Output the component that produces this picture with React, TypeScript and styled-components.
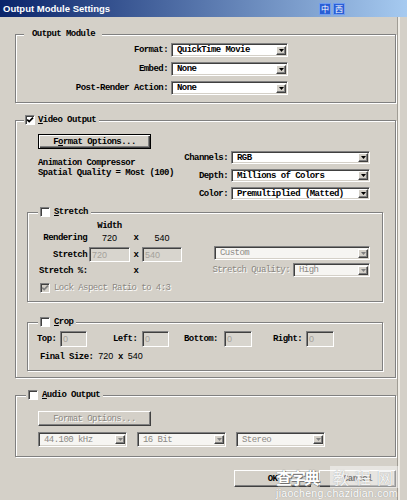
import React from "react";
import styled, { createGlobalStyle } from "styled-components";

const GlobalStyle = createGlobalStyle`
  html, body {
    margin: 0;
    padding: 0;
    background: #d4d0c8;
  }
`;

const Window = styled.div`
  position: relative;
  width: 407px;
  height: 500px;
  overflow: hidden;
  background: #d4d0c8;
  color: #000;
  font-family: "Liberation Mono", "Courier New", monospace;
  font-size: 9px;
  font-weight: bold;
  letter-spacing: -0.55px;
  line-height: 10px;
`;

const TitleBar = styled.div`
  display: flex;
  align-items: center;
  height: 17px;
  padding-left: 3px;
  background: linear-gradient(to right, #0a246a, #a6caf0);
`;

const Title = styled.span`
  font-family: "Liberation Sans", Arial, sans-serif;
  font-size: 9.5px;
  font-weight: bold;
  letter-spacing: 0;
  color: #fff;
`;

const ImeBar = styled.div`
  display: flex;
  gap: 2px;
  margin-left: auto;
  margin-right: 62px;
`;

const ImeKey = styled.span`
  width: 12px;
  height: 12px;
  box-sizing: border-box;
  display: flex;
  align-items: center;
  justify-content: center;
  background: #2a5fd6;
  border: 1px solid #6f9cf0;
  color: #fff;
  font-family: "Noto Sans CJK SC", sans-serif;
  font-size: 8px;
  font-weight: normal;
  letter-spacing: 0;
`;

const Frame = styled.div`
  display: flex;
  height: 483px;
`;

const Body = styled.div`
  display: flex;
  flex-direction: column;
  width: 381px;
  padding: 11px 0 0 15px;
`;

const FrameEdge = styled.div`
  flex: 1;
  margin-left: 1px;
  border-left: 1px solid #a09c94;
  box-shadow: inset 2px 0 0 #eeebe4;
`;

const Group = styled.fieldset<{ $mt?: number }>`
  margin: ${(p) => p.$mt ?? 0}px 0 0;
  padding: 0;
  min-inline-size: 0;
  border: 1px solid #808080;
  box-shadow: inset 1px 1px 0 #fff, 1px 1px 0 #fff;
`;

const Legend = styled.legend<{ $ml: number; $pl: number; $pr: number }>`
  margin-left: ${(p) => p.$ml}px;
  padding: 0 ${(p) => p.$pr}px 0 ${(p) => p.$pl}px;
  height: 12px;
  line-height: 12px;
  background: #d4d0c8;
`;

const LegendRow = styled.span<{ $gap: number }>`
  display: inline-flex;
  align-items: center;
  gap: ${(p) => p.$gap}px;
  height: 12px;
  vertical-align: top;
`;

const Key = styled.span`
  text-decoration: underline;
`;

const Dim = styled.span`
  flex-shrink: 0;
  white-space: nowrap;
  font-weight: normal;
  color: #8a8781;
  text-shadow: 1px 1px 0 #fff;
`;

const Box = styled.span<{ $disabled?: boolean }>`
  width: 10px;
  height: 10px;
  box-sizing: border-box;
  display: inline-flex;
  align-items: center;
  justify-content: center;
  background: ${(p) => (p.$disabled ? "#d4d0c8" : "#fff")};
  border: 1px solid;
  border-color: #808080 #fff #fff #808080;
  box-shadow: inset 1px 1px 0 #404040;
`;

const FormGrid = styled.div<{ $cols: string; $rowGap: number }>`
  display: grid;
  grid-template-columns: ${(p) => p.$cols};
  column-gap: 3px;
  row-gap: ${(p) => p.$rowGap}px;
  align-items: center;
`;

const FieldLabel = styled.span`
  text-align: right;
  white-space: nowrap;
`;

const SelectBox = styled.div<{ $w: number; $h: number; $disabled?: boolean }>`
  width: ${(p) => p.$w}px;
  height: ${(p) => p.$h}px;
  flex-shrink: 0;
  box-sizing: border-box;
  display: flex;
  align-items: center;
  padding: 0 1px 0 5px;
  background: ${(p) => (p.$disabled ? "#f6f5f2" : "#fff")};
  color: ${(p) => (p.$disabled ? "#8c8a86" : "#000")};
  font-weight: ${(p) => (p.$disabled ? "normal" : "bold")};
  border: 1px solid;
  border-color: #808080 #fff #fff #808080;
  box-shadow: inset 1px 1px 0 #404040, inset -1px -1px 0 #d4d0c8;
`;

const SelectValue = styled.span`
  flex: 1;
  white-space: nowrap;
  overflow: hidden;
`;

const DropBtn = styled.span`
  width: 10px;
  height: 9px;
  box-sizing: border-box;
  display: flex;
  align-items: center;
  justify-content: center;
  background: #d4d0c8;
  border: 1px solid;
  border-color: #fff #404040 #404040 #fff;
  box-shadow: inset -1px -1px 0 #808080;
`;

const TextBox = styled.span<{ $w: number; $h: number }>`
  width: ${(p) => p.$w}px;
  height: ${(p) => p.$h}px;
  box-sizing: border-box;
  display: flex;
  align-items: center;
  padding-left: 2px;
  background: #d8d5ce;
  color: #a4a19b;
  font-family: "Liberation Sans", Arial, sans-serif;
  font-size: 9px;
  font-weight: normal;
  letter-spacing: 0;
  border: 1px solid;
  border-color: #808080 #fff #fff #808080;
  box-shadow: inset 1px 1px 0 #404040;
`;

const Button = styled.div<{ $w: number; $h: number; $default?: boolean }>`
  width: ${(p) => p.$w}px;
  height: ${(p) => p.$h}px;
  box-sizing: border-box;
  display: flex;
  align-items: center;
  justify-content: center;
  background: #d4d0c8;
  border: 1px solid;
  border-color: ${(p) => (p.$default ? "#000" : "#fff #404040 #404040 #fff")};
  box-shadow: ${(p) =>
    p.$default
      ? "inset 1px 1px 0 #fff, inset -1px -1px 0 #404040, inset -2px -2px 0 #808080"
      : "inset -1px -1px 0 #808080"};
`;

const VideoInner = styled.div`
  padding: 0 12px 6px 11px;
`;

const TopArea = styled.div`
  display: flex;
  justify-content: space-between;
  padding: 0 13px 0 11px;
`;

const LeftCol = styled.div`
  display: flex;
  flex-direction: column;
  padding-top: 8px;
`;

const Info = styled.div`
  margin-top: 9px;
  white-space: pre;
`;

const RightCol = styled.div`
  padding-top: 25px;
`;

const StretchBody = styled.div`
  display: flex;
  justify-content: space-between;
`;

const StretchGrid = styled.div`
  display: grid;
  grid-template-columns: 50px 41px 12px 40px;
  grid-template-rows: 10px 14px 19px 14px 20px;
  align-items: center;
  margin: 3px 0 3px 11px;
`;

const Cell = styled.span<{ $align?: "left" | "center" | "right" }>`
  text-align: ${(p) => p.$align ?? "left"};
  white-space: nowrap;
  padding-right: ${(p) => (p.$align === "right" ? 2 : 0)}px;
`;

const Num = styled.span`
  font-family: "Liberation Sans", Arial, sans-serif;
  font-size: 9px;
  font-weight: normal;
  letter-spacing: 0;
`;

const LockRow = styled.div`
  grid-column: 1 / -1;
  display: flex;
  align-items: center;
  gap: 4px;
  margin-left: 1px;
`;

const StretchSide = styled.div`
  display: flex;
  flex-direction: column;
  gap: 3px;
  width: 156px;
  margin: 28px 12px 0 0;
`;

const QualityRow = styled.div`
  display: flex;
  justify-content: flex-end;
  align-items: center;
  gap: 3px;
`;

const CropRow = styled.div`
  display: flex;
  align-items: center;
  height: 16px;
  margin: 3px 0 0 9px;
`;

const CropLabel = styled.span<{ $w: number }>`
  width: ${(p) => p.$w}px;
  white-space: nowrap;
`;

const CropField = styled.div<{ $mr: number }>`
  display: flex;
  align-items: center;
  margin-right: ${(p) => p.$mr}px;
`;

const FinalSize = styled.div`
  margin: 4px 0 8px 12px;
`;

const AudioInner = styled.div`
  display: flex;
  flex-direction: column;
  padding: 10px 0 9px 22px;
`;

const AudioSelects = styled.div`
  display: flex;
  gap: 10px;
  margin-top: 6px;
`;

const Footer = styled.div`
  display: flex;
  justify-content: flex-end;
  gap: 8px;
  margin-top: 13px;
`;

const Watermark = styled.div`
  position: absolute;
  left: 276px;
  top: 466px;
  display: flex;
  flex-direction: column;
  pointer-events: none;
  font-weight: normal;
`;

const MarkTitle = styled.div`
  display: flex;
  align-items: center;
  gap: 12px;
  font-family: "Noto Sans CJK SC", sans-serif;
  font-size: 16px;
  line-height: 22px;
`;

const MarkMain = styled.span`
  color: #fff;
  font-weight: bold;
  letter-spacing: -2px;
  text-shadow: 0 0 1px #555, 1px 1px 0 #777;
`;

const MarkSub = styled.span`
  color: #f4f4f4;
  letter-spacing: 6px;
  padding: 0 0 0 3px;
  background: rgba(255, 255, 255, 0.45);
  text-shadow: 0 0 1px #999;
`;

const MarkUrl = styled.span`
  font-family: "Liberation Sans", Arial, sans-serif;
  font-size: 10.5px;
  line-height: 11px;
  letter-spacing: 0.3px;
  color: #fff;
  text-shadow: 0 0 1px #888;
`;

function Arrow({ disabled }: { disabled?: boolean }) {
  return (
    <svg width="5" height="3" viewBox="0 0 5 3">
      <path d="M0 0h5L2.5 3z" fill={disabled ? "#808080" : "#000"} />
    </svg>
  );
}

function Select({
  value,
  w,
  h = 14,
  disabled,
}: {
  value: string;
  w: number;
  h?: number;
  disabled?: boolean;
}) {
  return (
    <SelectBox $w={w} $h={h} $disabled={disabled}>
      <SelectValue>{value}</SelectValue>
      <DropBtn>
        <Arrow disabled={disabled} />
      </DropBtn>
    </SelectBox>
  );
}

function Check({ checked, disabled }: { checked?: boolean; disabled?: boolean }) {
  return (
    <Box $disabled={disabled}>
      {checked && (
        <svg width="8" height="8" viewBox="0 0 8 8">
          <path
            d="M1.2 3.6 L3.2 5.6 L7 1.6"
            fill="none"
            stroke={disabled ? "#808080" : "#000"}
            strokeWidth="1.7"
          />
        </svg>
      )}
    </Box>
  );
}

export default function App() {
  return (
    <Window>
      <GlobalStyle />
      <TitleBar>
        <Title>Output Module Settings</Title>
        <ImeBar>
          <ImeKey>中</ImeKey>
          <ImeKey>西</ImeKey>
        </ImeBar>
      </TitleBar>

      <Frame>
        <Body>
          <Group>
            <Legend $ml={8} $pl={8} $pr={7}>
              Output Module
            </Legend>
            <FormGrid $cols="152px 117px" $rowGap={5} style={{ padding: "3px 0 7px" }}>
              <FieldLabel>Format:</FieldLabel>
              <Select value="QuickTime Movie" w={117} />
              <FieldLabel>Embed:</FieldLabel>
              <Select value="None" w={117} />
              <FieldLabel>Post-Render Action:</FieldLabel>
              <Select value="None" w={117} />
            </FormGrid>
          </Group>

          <Group $mt={11}>
            <Legend $ml={8} $pl={1} $pr={3}>
              <LegendRow $gap={3}>
                <Check checked />
                <span>
                  <Key>V</Key>ideo Output
                </span>
              </LegendRow>
            </Legend>
            <VideoInner>
              <TopArea>
                <LeftCol>
                  <Button $w={113} $h={15} $default>
                    <span>
                      F<Key>o</Key>rmat Options...
                    </span>
                  </Button>
                  <Info>{"Animation Compressor\nSpatial Quality = Most (100)"}</Info>
                </LeftCol>
                <RightCol>
                  <FormGrid $cols="auto 139px" $rowGap={5}>
                    <FieldLabel>Channels:</FieldLabel>
                    <Select value="RGB" w={139} h={13} />
                    <FieldLabel>Depth:</FieldLabel>
                    <Select value="Millions of Colors" w={139} h={13} />
                    <FieldLabel>Color:</FieldLabel>
                    <Select value="Premultiplied (Matted)" w={139} h={13} />
                  </FormGrid>
                </RightCol>
              </TopArea>

              <Group $mt={6}>
                <Legend $ml={10} $pl={2} $pr={3}>
                  <LegendRow $gap={4}>
                    <Check />
                    <span>
                      <Key>S</Key>tretch
                    </span>
                  </LegendRow>
                </Legend>
                <StretchBody>
                  <StretchGrid>
                    <span />
                    <Cell $align="center">Width</Cell>
                    <span />
                    <span />

                    <Cell $align="right">Rendering</Cell>
                    <Cell $align="center">
                      <Num>720</Num>
                    </Cell>
                    <Cell $align="center">x</Cell>
                    <Cell $align="center">
                      <Num>540</Num>
                    </Cell>

                    <Cell $align="right">Stretch</Cell>
                    <TextBox $w={41} $h={15}>720</TextBox>
                    <Cell $align="center">x</Cell>
                    <TextBox $w={40} $h={15}>540</TextBox>

                    <Cell>Stretch %:</Cell>
                    <span />
                    <Cell $align="center">x</Cell>
                    <span />

                    <LockRow>
                      <Check checked disabled />
                      <Dim>Lock Aspect Ratio to 4:3</Dim>
                    </LockRow>
                  </StretchGrid>
                  <StretchSide>
                    <Select value="Custom" w={156} disabled />
                    <QualityRow>
                      <Dim>Stretch Quality:</Dim>
                      <Select value="High" w={77} disabled />
                    </QualityRow>
                  </StretchSide>
                </StretchBody>
              </Group>

              <Group $mt={14}>
                <Legend $ml={10} $pl={2} $pr={3}>
                  <LegendRow $gap={4}>
                    <Check />
                    <span>
                      <Key>C</Key>rop
                    </span>
                  </LegendRow>
                </Legend>
                <CropRow>
                  <CropField $mr={26}>
                    <CropLabel $w={23}>Top:</CropLabel>
                    <TextBox $w={27} $h={16}>0</TextBox>
                  </CropField>
                  <CropField $mr={15}>
                    <CropLabel $w={29}>Left:</CropLabel>
                    <TextBox $w={27} $h={16}>0</TextBox>
                  </CropField>
                  <CropField $mr={21}>
                    <CropLabel $w={40}>Bottom:</CropLabel>
                    <TextBox $w={28} $h={16}>0</TextBox>
                  </CropField>
                  <CropField $mr={0}>
                    <CropLabel $w={33}>Right:</CropLabel>
                    <TextBox $w={28} $h={16}>0</TextBox>
                  </CropField>
                </CropRow>
                <FinalSize>
                  Final Size: <Num>720</Num> x <Num>540</Num>
                </FinalSize>
              </Group>
            </VideoInner>
          </Group>

          <Group $mt={11}>
            <Legend $ml={10} $pl={2} $pr={3}>
              <LegendRow $gap={4}>
                <Check />
                <span>
                  <Key>A</Key>udio Output
                </span>
              </LegendRow>
            </Legend>
            <AudioInner>
              <Button $w={113} $h={15}>
                <Dim>Format Options...</Dim>
              </Button>
              <AudioSelects>
                <Select value="44.100 kHz" w={89} h={15} disabled />
                <Select value="16 Bit" w={89} h={15} disabled />
                <Select value="Stereo" w={89} h={15} disabled />
              </AudioSelects>
            </AudioInner>
          </Group>

          <Footer>
            <Button $w={77} $h={17}>
              OK
            </Button>
            <Button $w={77} $h={17}>
              Cancel
            </Button>
          </Footer>
        </Body>
        <FrameEdge />
      </Frame>

      <Watermark>
        <MarkTitle>
          <MarkMain>查字典</MarkMain>
          <MarkSub>教程网</MarkSub>
        </MarkTitle>
        <MarkUrl>jiaocheng.chazidian.com</MarkUrl>
      </Watermark>
    </Window>
  );
}
